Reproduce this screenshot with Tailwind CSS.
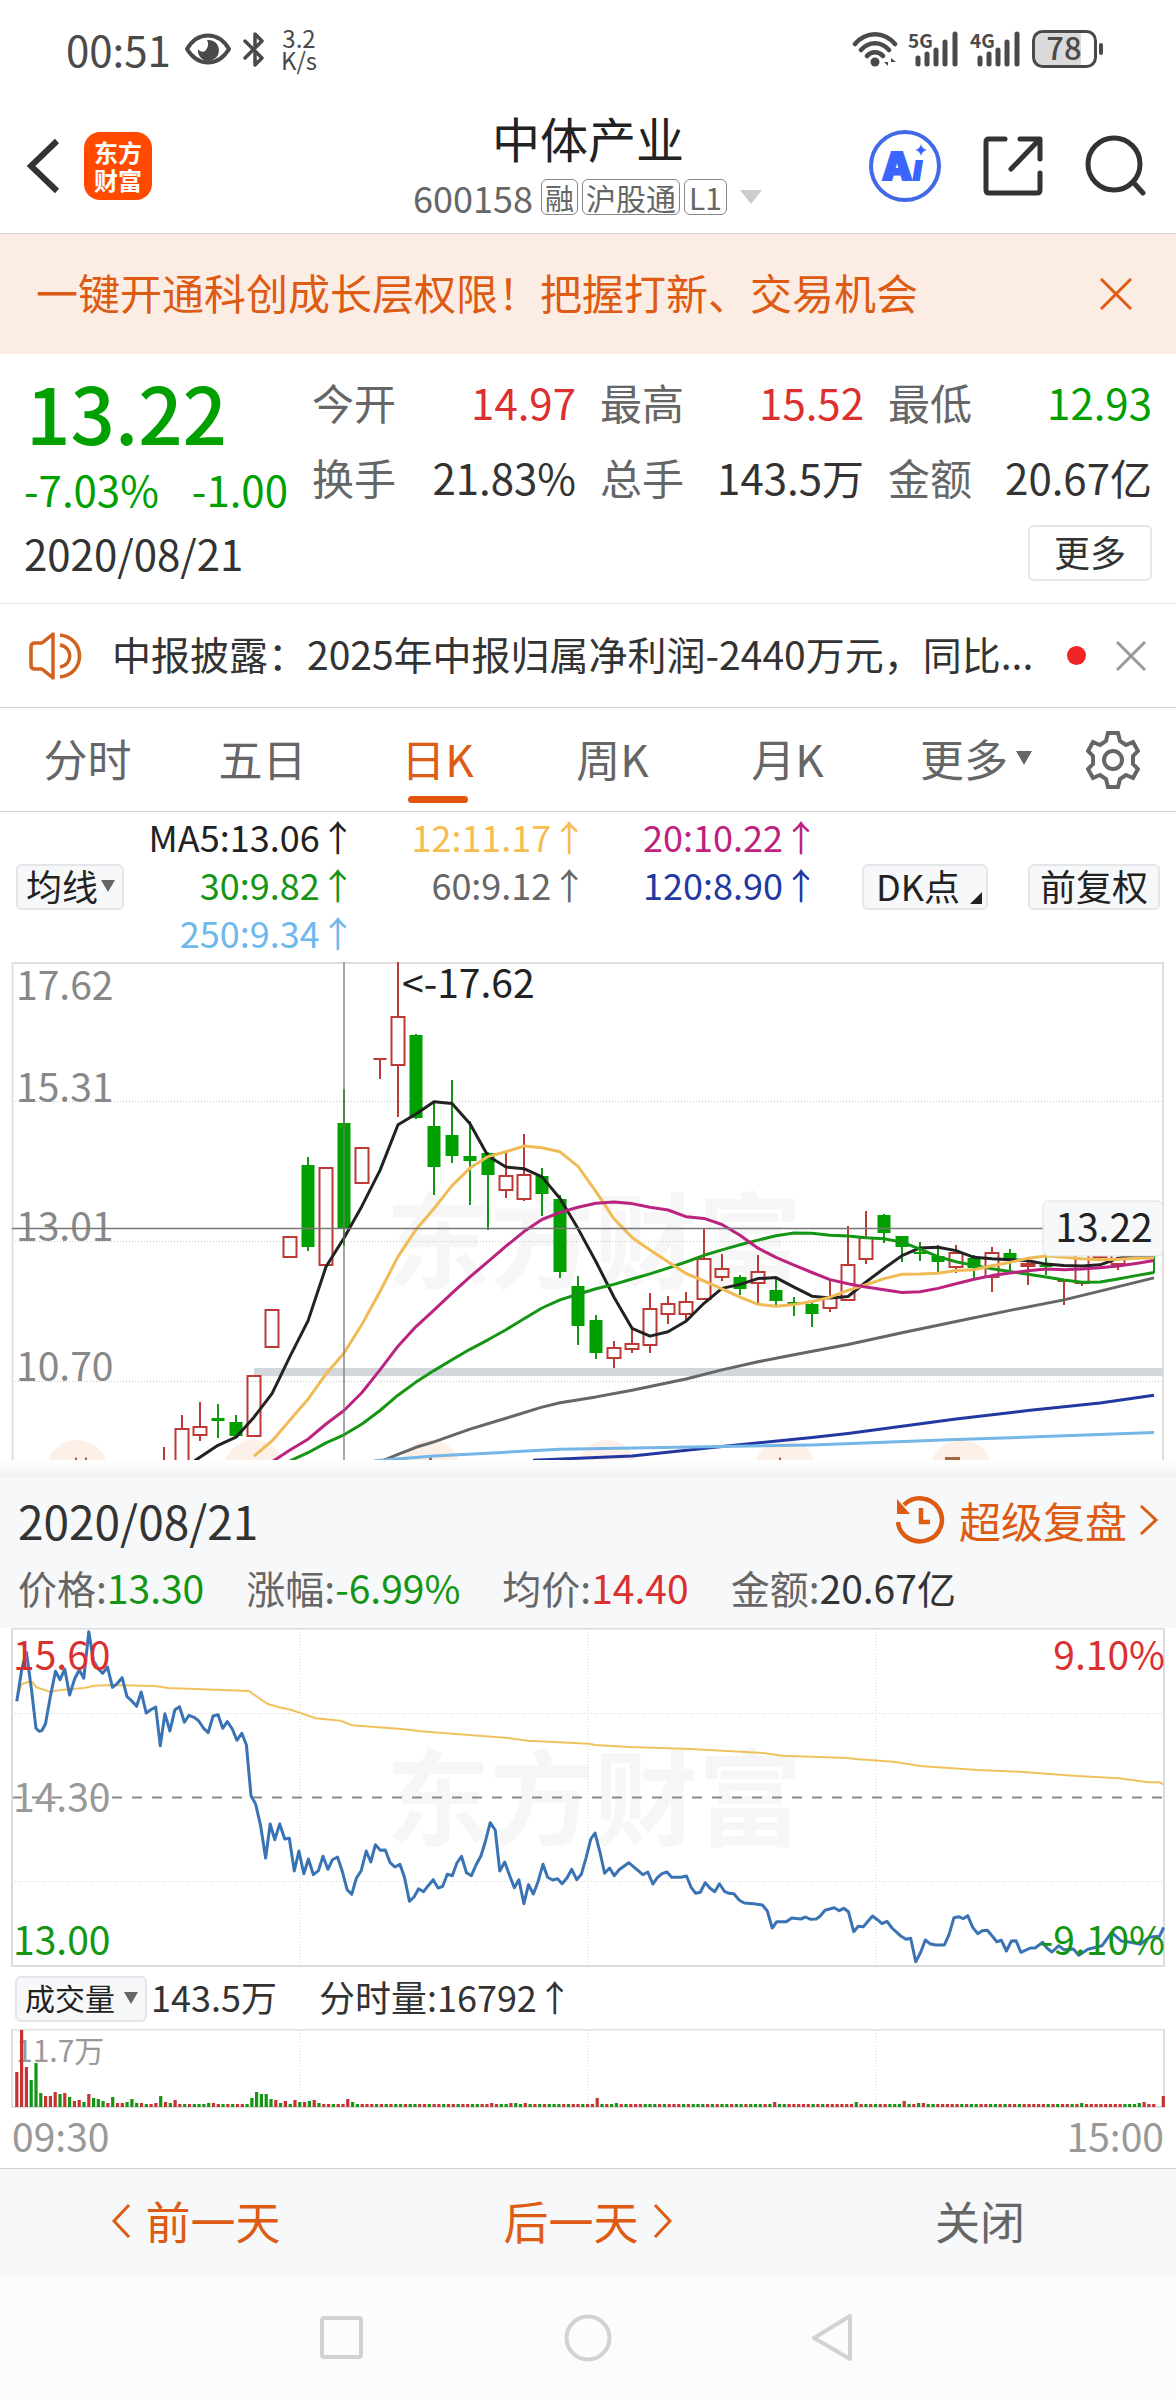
<!DOCTYPE html>
<html lang="zh-CN">
<head>
<meta charset="utf-8">
<meta name="viewport" content="width=device-width, initial-scale=1">
<title>中体产业 600158</title>
<script src="https://cdn.jsdelivr.net/npm/@tailwindcss/browser@4"></script>
</head>
<body class="bg-white font-['Noto_Sans_CJK_SC',sans-serif] text-[#333]">

<!-- System status bar -->
<div class="flex h-[98px] items-center justify-between pl-[66px] pr-[72px] text-[#4a4a4a]">
  <div class="flex items-center">
    <span class="text-[42px] leading-[64px]">00:51</span>
    <svg class="ml-3.5 h-8 w-[46px]" viewBox="0 0 46 32" fill="none"><path d="M2 16C8 6 15 2.500 23 2.500S38 6 44 16C38 26 31 29.500 23 29.500S8 26 2 16Z" stroke="currentColor" stroke-width="4"/><path d="M22 7a10.500 10.500 0 1 1-9 9c2 3 6 4 8 1s3-6 1-10Z" fill="currentColor"/></svg>
    <svg class="ml-3 h-9 w-[22px]" viewBox="0 0 22 36" fill="none" stroke="currentColor" stroke-width="3.500" stroke-linecap="round" stroke-linejoin="round"><path d="M2 10 19 27l-7 7V20M2 27 19 10l-7-7v12"/></svg>
    <span class="ml-4 text-center text-[24px] leading-[22px]">3.2<br>K/s</span>
  </div>
  <div class="flex items-center">
    <svg class="h-9 w-[46px]" viewBox="0 0 46 36" fill="none" stroke="currentColor" stroke-width="4.500" stroke-linecap="round"><path d="M3 13C14 0 32 0 43 13M9 19c8-9 20-9 28 0M15 25c4-5 12-5 16 0"/><circle cx="23" cy="31" r="4.500" fill="currentColor" stroke="none"/><path d="M36 27v8l-4-4h4M39 35v-8l5 4h-5" fill="currentColor" stroke="none"/></svg>
    <svg class="ml-2.5 h-9 w-[52px] overflow-visible" viewBox="0 0 52 36"><text x="0" y="17" font-size="19" font-weight="700" fill="currentColor">5G</text><path d="M10 27v6M19 23v10M28 19v14M37 11v22M47 3v30" stroke="currentColor" stroke-width="5" stroke-linecap="round"/></svg>
    <svg class="ml-2.5 h-9 w-[52px] overflow-visible" viewBox="0 0 52 36"><text x="0" y="17" font-size="19" font-weight="700" fill="currentColor">4G</text><path d="M10 27v6M19 23v10M28 19v14M37 11v22M47 3v30" stroke="currentColor" stroke-width="5" stroke-linecap="round"/></svg>
    <svg class="ml-2.5 h-[38px] w-[72px] overflow-visible" viewBox="0 0 72 38"><rect x="1.500" y="1.500" width="62" height="35" rx="9" fill="#fff"/><path d="M10 2h39v34H10a8 8 0 0 1-8-8V10a8 8 0 0 1 8-8Z" fill="#dadada"/><rect x="1.500" y="1.500" width="62" height="35" rx="9" fill="none" stroke="currentColor" stroke-width="3"/><rect x="67" y="13" width="4" height="12" rx="2" fill="currentColor"/><text x="32" y="30" text-anchor="middle" font-size="31" font-weight="500" fill="currentColor">78</text></svg>
  </div>
</div>

<!-- App header -->
<header class="grid h-[136px] grid-cols-[1fr_auto_1fr] items-center border-b border-[#d4d4d4] px-6">
  <div class="flex items-center gap-6">
    <button aria-label="返回"><svg class="h-14 w-9" viewBox="0 0 36 56" fill="none" stroke="#333" stroke-width="6"><path d="M33 3 7 28l26 25"/></svg></button>
    <a href="#" class="grid size-[68px] place-content-center rounded-2xl bg-[#ff4a00] text-center text-[24px] font-bold leading-7 text-white">东方<br>财富</a>
  </div>
  <div class="flex flex-col items-center pb-0.5">
    <h1 class="text-[48px] leading-[56px] text-[#222]">中体产业</h1>
    <div class="mt-2 flex items-center gap-1 text-[#666]">
      <span class="text-[36px] leading-[48px]">600158</span>
      <span class="ml-1 grid h-9 place-content-center rounded-md border border-[#888] px-[3px] text-[29px] leading-[34px]">融</span>
      <span class="grid h-9 place-content-center rounded-md border border-[#888] px-[3px] text-[30px] leading-[34px]">沪股通</span>
      <span class="grid h-9 place-content-center rounded-md border border-[#888] px-1 text-[30px] leading-[34px]">L1</span>
      <svg class="ml-2 h-4 w-6" viewBox="0 0 24 16"><path d="M1 1h22L12 15Z" fill="#ccc"/></svg>
    </div>
  </div>
  <div class="flex items-center justify-end gap-10 pr-1.5">
    <button aria-label="Ai"><svg class="size-[74px]" viewBox="0 0 74 74"><circle cx="37" cy="37" r="34" fill="#fff" stroke="#4169e8" stroke-width="4"/><text x="14" y="51" font-family="Inter, sans-serif" font-size="38" font-weight="900" fill="#3a66ff" stroke="#3a66ff" stroke-width="2">A</text><text x="44" y="52" font-family="Inter, sans-serif" font-size="38" font-weight="900" font-style="italic" fill="#3a66ff">ı</text><path d="M53 15q1 5 6 6-5 1-6 6-1-5-6-6 5-1 6-6Z" fill="#3a66ff"/></svg></button>
    <button aria-label="分享"><svg class="size-[62px]" viewBox="0 0 62 62" fill="none" stroke="#333" stroke-width="5" stroke-linecap="round" stroke-linejoin="round"><path d="M23 4H7q-3 0-3 3v48q0 3 3 3h48q3 0 3-3V38M38 4h20v20M56 6 29 34"/></svg></button>
    <button aria-label="搜索"><svg class="size-[62px]" viewBox="0 0 62 62" fill="none" stroke="#333" stroke-width="5" stroke-linecap="round"><circle cx="30" cy="29" r="26"/><path d="m49 47 10 11"/></svg></button>
  </div>
</header>

<!-- Promotion banner -->
<div class="flex h-[120px] items-center justify-between bg-[#fcede4] pl-9 pr-11 text-[#dd5b13]">
  <a href="#" class="pb-1 text-[42px] leading-[60px]">一键开通科创成长层权限！把握打新、交易机会</a>
  <button aria-label="关闭提示"><svg class="size-8" viewBox="0 0 32 32" fill="none" stroke="currentColor" stroke-width="3"><path d="m1 1 30 30M31 1 1 31"/></svg></button>
</div>

<!-- Quote summary -->
<section class="border-b border-[#ebebeb] px-6 pt-1 pb-[22px]">
  <div class="grid grid-cols-4 gap-x-6 text-[42px]">
    <div class="text-[#00a000]">
      <div class="h-[104px] pl-0.5 text-[78px] font-medium leading-[106px]">13.22</div>
      <div class="flex h-[52px] justify-between gap-6 whitespace-nowrap leading-[54px]"><span>-7.03%</span><span>-1.00</span></div>
    </div>
    <dl class="flex flex-col whitespace-nowrap pt-1.5 leading-[75px]">
      <div class="flex justify-between"><dt class="text-[#666]">今开</dt><dd class="text-[#dc2f2f]">14.97</dd></div>
      <div class="flex justify-between"><dt class="text-[#666]">换手</dt><dd>21.83%</dd></div>
    </dl>
    <dl class="flex flex-col whitespace-nowrap pt-1.5 leading-[75px]">
      <div class="flex justify-between"><dt class="text-[#666]">最高</dt><dd class="text-[#dc2f2f]">15.52</dd></div>
      <div class="flex justify-between"><dt class="text-[#666]">总手</dt><dd>143.5万</dd></div>
    </dl>
    <dl class="flex flex-col whitespace-nowrap pt-1.5 leading-[75px]">
      <div class="flex justify-between"><dt class="text-[#666]">最低</dt><dd class="text-[#00a000]">12.93</dd></div>
      <div class="flex justify-between"><dt class="text-[#666]">金额</dt><dd>20.67亿</dd></div>
    </dl>
  </div>
  <div class="mt-[11px] flex h-14 items-center justify-between">
    <time class="text-[42px] leading-[56px]">2020/08/21</time>
    <button class="h-14 rounded-md border-2 border-[#e6e6e6] px-6 pb-1 text-[36px] leading-[44px]">更多</button>
  </div>
</section>

<!-- News ticker -->
<section class="flex h-[104px] items-center border-b border-[#d4d4d4] pl-7 pr-[30px]">
  <svg class="h-12 w-[54px] shrink-0" viewBox="0 0 54 48" fill="none" stroke="#d2601f" stroke-width="3.500" stroke-linejoin="round"><path d="M25 2 14 11H7q-4 0-4 4v18q0 4 4 4h7l11 9Z"/><path d="M32 3c26 3 26 39 0 42M32 13c13 2 13 20 0 22"/></svg>
  <a href="#" class="ml-[30px] min-w-0 flex-1 overflow-hidden whitespace-nowrap pb-1.5 text-[39px] leading-[56px]">中报披露：2025年中报归属净利润-2440万元，同比...</a>
  <span class="size-[19px] shrink-0 rounded-full bg-[#f02424]"></span>
  <button class="ml-[30px]" aria-label="关闭公告"><svg class="size-[30px]" viewBox="0 0 30 30" fill="none" stroke="#999" stroke-width="3"><path d="m1 1 28 28M29 1 1 29"/></svg></button>
</section>

<!-- Period tabs -->
<nav class="grid h-[104px] grid-cols-[repeat(6,25fr)_18fr] border-b border-[#d4d4d4] text-[44px] text-[#666]">
  <button class="pb-1">分时</button>
  <button class="pb-1">五日</button>
  <button class="relative pb-1 text-[#dd5b13]">日K<span class="absolute bottom-2 left-1/2 h-[7px] w-[60px] -translate-x-1/2 rounded-full bg-[#e0560c]"></span></button>
  <button class="pb-1">周K</button>
  <button class="pb-1">月K</button>
  <button class="flex items-center justify-end gap-2 whitespace-nowrap pb-1 pr-[18px]">更多<svg class="h-3.5 w-4" viewBox="0 0 16 14"><path d="M0 0h16L8 14Z" fill="currentColor"/></svg></button>
  <button class="grid place-content-center" aria-label="设置"><svg class="h-[60px] w-[54px]" viewBox="0 0 54 60" fill="none" stroke="currentColor" stroke-width="4"><path d="M22 3h10l2 8 6 4 7-3 5 9-5 5v8l5 5-5 9-7-3-6 4-2 8H22l-2-8-6-4-7 3-5-9 5-5v-8l-5-5 5-9 7 3 6-4Z"/><circle cx="27" cy="30" r="9"/></svg></button>
</nav>

<!-- Moving average legend -->
<section class="flex h-[150px] items-center px-4 text-[36px] text-[#222]">
  <label class="relative shrink-0">
    <select class="block h-[46px] w-[108px] appearance-none rounded-md border-2 border-[#e4e6ea] bg-[#f6f8fa] pb-1 pl-2 text-[36px] leading-[38px]" aria-label="指标"><option>均线</option></select>
    <svg class="pointer-events-none absolute right-2 top-4 h-3 w-4" viewBox="0 0 16 12"><path d="M1 0h14L8 12Z" fill="#666"/></svg>
  </label>
  <div class="grid flex-[695] grid-cols-3 whitespace-nowrap pb-1.5 text-right leading-[48px]">
    <span>MA5:13.06↑</span><span class="text-[#f5bd4f]">12:11.17↑</span><span class="text-[#c0207e]">20:10.22↑</span>
    <span class="text-[#149614]">30:9.82↑</span><span class="text-[#666]">60:9.12↑</span><span class="text-[#2238a0]">120:8.90↑</span>
    <span class="text-[#6fb8ec]">250:9.34↑</span>
  </div>
  <div class="flex flex-[341] justify-end gap-10">
    <button class="relative h-[46px] w-[126px] rounded-md border-2 border-[#e4e6ea] bg-[#f6f8fa] pb-1 pl-3 text-left leading-[38px]">DK点<svg class="absolute bottom-1 right-1 size-3" viewBox="0 0 12 12"><path d="M12 0v12H0Z" fill="#222"/></svg></button>
    <button class="h-[46px] w-[132px] whitespace-nowrap rounded-md border-2 border-[#e4e6ea] bg-[#f6f8fa] pb-1 leading-[38px]">前复权</button>
  </div>
</section>

<!-- Daily candlestick chart -->
<svg class="block h-auto w-full" viewBox="0 0 1176 498" role="img" aria-label="日K线图">
  <text x="386" y="319" font-size="104" font-weight="700" fill="#f6f6f6">东方财富</text>
  <g fill="#fdf0e8"><circle cx="77" cy="509" r="31"/><circle cx="254" cy="509" r="31"/><circle cx="430" cy="509" r="31"/><circle cx="607" cy="509" r="31"/><circle cx="785" cy="509" r="31"/><circle cx="961" cy="509" r="31"/></g>
  <path d="M945 496.500h15M75 497h2M85 497h2M429 497h3M779 497h2" stroke="#a5673f" stroke-width="3"/>
  <g stroke="#c9c9c9" stroke-dasharray="1 2"><path d="M12 139.500h1151M12 279.500h1151M12 419.500h1151"/></g>
  <path d="M12.500 498V1M1163 498V1M12 1h1152" stroke="#dfdfdf" stroke-width="2" fill="none"/>
  <rect x="254" y="406" width="909" height="8" fill="#d3d6da"/>
  <g font-size="39" fill="#888"><text x="16" y="38">17.62</text><text x="16" y="140">15.31</text><text x="16" y="279">13.01</text><text x="16" y="419">10.70</text></g>
  <g id="candles"></g>
  <g id="averages" fill="none" stroke-width="3" stroke-linejoin="round"></g>
  <path d="M344 0v498" stroke="#777" stroke-opacity=".65" stroke-width="2"/>
  <path d="M12 266.500h1151" stroke="#777" stroke-width="1.500"/>
  <text x="402" y="36" font-size="39" fill="#222">&lt;-17.62</text>
  <rect x="1043" y="239" width="120" height="55" rx="6" fill="#f6f8fa" stroke="#dcdfe3"/>
  <text x="1104" y="280" font-size="39" fill="#222" text-anchor="middle">13.22</text>
</svg>
<div class="h-[18px] bg-linear-to-b from-white to-[#f0f0f0]"></div>

<!-- Intraday replay panel -->
<section>
  <div class="bg-[#f6f8fa] pl-[18px] pr-[15px] pt-2.5">
    <div class="flex h-16 items-center justify-between">
      <time class="text-[46px] leading-[64px]">2020/08/21</time>
      <a href="#" class="flex items-center text-[42px] leading-[64px] text-[#dd5b13]">
        <svg class="mr-3.5 size-[50px]" viewBox="0 0 50 50" fill="none" stroke="currentColor" stroke-width="4.500"><path d="M3 27a22 21.500 0 1 0 6-17"/><path d="M2 4v15h13Z" fill="currentColor" stroke="none"/><path d="M26 13v14h9"/></svg>超级复盘<svg class="ml-3 mr-0.5 h-8 w-5" viewBox="0 0 20 32" fill="none" stroke="currentColor" stroke-width="3"><path d="m2 2 15 14L2 30"/></svg>
      </a>
    </div>
    <div class="flex h-[76px] gap-[42px] whitespace-nowrap text-[39px] leading-[70px] text-[#666]">
      <span>价格:<b class="font-normal text-[#149614]">13.30</b></span>
      <span>涨幅:<b class="font-normal text-[#149614]">-6.99%</b></span>
      <span>均价:<b class="font-normal text-[#dc2f2f]">14.40</b></span>
      <span>金额:<b class="font-normal text-[#333]">20.67亿</b></span>
    </div>
  </div>

  <svg class="block h-auto w-full" viewBox="0 0 1176 340" role="img" aria-label="分时走势图">
    <text x="386" y="210" font-size="104" font-weight="700" fill="#f6f6f6">东方财富</text>
    <path d="M12 85.500h1152M12 253.500h1152M300 1v336M588 1v336M876 1v336" stroke="#d2d2d2" stroke-dasharray="1 2"/>
    <path d="M12 169.500h1152" stroke="#8a8a8a" stroke-width="2" stroke-dasharray="10 10"/>
    <path d="M12 .500h1152V338H12Z" stroke="#dcdcdc" stroke-width="2" fill="none"/>
    <polyline id="avgLine" fill="none" stroke="#f0c25e" stroke-width="2"/>
    <polyline id="priceLine" fill="none" stroke="#3a73b3" stroke-width="3" stroke-linejoin="round"/>
    <g font-size="39"><text x="13" y="42" fill="#d93030">15.60</text><text x="13" y="184" fill="#999">14.30</text><text x="13" y="327" fill="#149614">13.00</text>
    <g text-anchor="end"><text x="1165" y="42" fill="#d93030">9.10%</text><text x="1165" y="327" fill="#149614">-9.10%</text></g></g>
  </svg>

  <div class="flex h-[61px] items-center pl-[15px] text-[36px]">
    <label class="relative shrink-0">
      <select class="block h-[46px] w-[132px] appearance-none rounded-md border-2 border-[#e4e6ea] bg-[#f6f8fa] pb-1 pl-2 text-[30px] leading-[38px] text-[#222]" aria-label="副图指标"><option>成交量</option></select>
      <svg class="pointer-events-none absolute right-2 top-4 h-3 w-4" viewBox="0 0 16 12"><path d="M1 0h14L8 12Z" fill="#666"/></svg>
    </label>
    <span class="ml-1 pb-1.5">143.5万</span><span class="ml-[42px] pb-1.5">分时量:16792↑</span>
  </div>

  <svg class="block h-auto w-full" viewBox="0 0 1176 79" role="img" aria-label="分时成交量">
    <path d="M300 1v77M588 1v77M876 1v77" stroke="#d2d2d2" stroke-dasharray="1 2"/>
    <path d="M12 .500h1152V78H12Z" stroke="#dfdfdf" stroke-width="2" fill="none"/>
    <text x="16" y="33" font-size="30" fill="#999">11.7万</text>
    <g id="volume"></g>
  </svg>
  <div class="flex h-[60px] justify-between px-3 text-[39px] leading-[54px] text-[#999]"><span>09:30</span><span>15:00</span></div>

  <div class="grid h-[109px] grid-cols-3 border-t border-[#d4d4d4] bg-[#f6f8fa] text-[45px] text-[#dd5b13]">
    <button class="flex items-center justify-center gap-3.5 pb-1"><svg class="h-9 w-5" viewBox="0 0 20 36" fill="none" stroke="currentColor" stroke-width="3"><path d="M18 2 3 18l15 16"/></svg>前一天</button>
    <button class="flex items-center justify-center gap-3.5 pb-1">后一天<svg class="h-9 w-5" viewBox="0 0 20 36" fill="none" stroke="currentColor" stroke-width="3"><path d="m2 2 15 16L2 34"/></svg></button>
    <button class="pb-1 text-[#666]">关闭</button>
  </div>
</section>

<!-- System navigation -->
<div class="flex h-[122px] items-center justify-center gap-[198px] bg-[#fcfcfc]">
  <button aria-label="最近任务"><svg class="size-12" viewBox="0 0 48 48" fill="none" stroke="#d2d2d2" stroke-width="4"><rect x="4" y="4" width="39" height="39" rx="2"/></svg></button>
  <button aria-label="主页"><svg class="size-12" viewBox="0 0 48 48" fill="none" stroke="#d2d2d2" stroke-width="4"><circle cx="24" cy="24" r="21.500"/></svg></button>
  <button aria-label="返回上级"><svg class="size-12" viewBox="0 0 48 48" fill="none" stroke="#d2d2d2" stroke-width="4" stroke-linejoin="round"><path d="M40 2v43L4 24Z"/></svg></button>
</div>

<script>
// Candles: [kind, high, bodyTop, bodyBottom, low], one per trading day
const candles = [
['r',485,520,530,530],['r',453,467,520,520],['r',440,465,473,479],['g',442,456,459,476],['g',453,460,474,474],['r',414,414,474,474],
['r',348,348,385,385],['r',275,275,295,295],['g',195,203,285,289],['r',206,206,303,303],['g',127,161,266,284],['r',186,186,221,221],
['t',97,97,97,117],['r',0,55,103,155],['g',72,73,156,157],['g',141,164,205,233],['g',118,173,194,201],['g',159,194,199,243],
['g',190,191,213,268],['r',190,214,228,236],['r',172,213,237,239],['g',206,214,232,254],['g',233,237,310,316],['g',314,324,364,383],
['g',353,358,391,397],['r',379,386,396,406],['r',367,382,387,391],['r',331,347,383,391],['r',334,342,352,362],['r',330,340,352,358],
['r',267,297,337,337],['r',292,307,315,319],['g',313,315,327,333],['r',293,310,321,341],['g',316,328,339,343],['g',335,340,342,354],
['g',341,342,352,365],['r',318,335,346,350],['r',264,303,338,338],['r',249,276,297,302],['g',252,253,271,281],['g',274,274,285,300],
['g',280,290,292,299],['g',283,294,300,310],['r',283,291,305,311],['g',293,296,306,316],['r',285,291,315,330],['g',287,291,298,308],
['r',300,302,304,323],['g',294,303,305,313],['t',319,319,319,343],['r',288,293,321,324],['r',285,285,295,297],['r',285,285,302,308],
['r',285,285,295,297]];
const xAt = i => 164 + 18 * i;
let wickR = '', boxR = '', wickG = '', boxG = '';
candles.forEach(([k, h, t, b, l], i) => {
  const x = xAt(i);
  if (k === 'g') { wickG += `M${x} ${h}V${l}`; boxG += `M${x - 6.5} ${t}h13V${b}h-13Z`; }
  else if (k === 't') { wickR += `M${x - 6.5} ${t}h13M${x} ${t}V${l}`; }
  else { wickR += `M${x} ${h}V${t}M${x} ${b}V${l}`; boxR += `M${x - 6.5} ${t}h13V${b}h-13Z`; }
});
document.getElementById('candles').innerHTML =
  `<path d="${wickR}${boxR}" fill="none" stroke="#bb3a36" stroke-width="2"/>` +
  `<path d="${wickG}M1154 293V311" stroke="#149614" stroke-width="2"/><path d="${boxG}" fill="#00a000"/>`;

// Moving averages: colour, first day, then one level per day; or [day, level] pairs
const series = [
['#666',[[12,1517],[13,1495],[14,1474],[15,1458],[17,1420],[19,1388],[21,1355],[22,1342],[24,1325],[26,1305],[29,1272],[31,1245],[33,1221],[35,1200],[38,1170],[41,1135],[44,1102],[47,1069],[50,1038],[52,1012],[55,973]]],
['#2238a0',[[20.5,1512],[24,1504],[26,1500],[31,1472],[36,1445],[38,1433],[44,1390],[48,1365],[52,1343],[55,1320]]],
['#74b6e6',[[11.7,1514],[15,1500],[18.5,1490],[22,1480],[31,1472],[36,1467],[40,1459],[44,1451],[48.5,1443],[55,1430]]],
['#222',1.7,[1514,1468,1444,1385,1315,1205,1100,940,855,760,655,520,488,452,457,517,612,645,650,674,738,827,925,1030,1122,1145,1132,1101,1048,1004,992,975,972,1000,1027,1032,1028,985,945,907,884,882,892,912,916,919,922,932,936,938,934,915,905,912],3],
['#149614',7,[1514,1490,1461,1437,1405,1365,1320,1281,1247,1215,1184,1156,1126,1094,1062,1038,1021,1005,992,976,961,944,926,906,890,875,861,848,840,841,847,849,854,857,867,888,910,925,936,946,954,962,970,979,986,985,976,966,957]],
['#f0bb55',5,[1500,1455,1393,1332,1257,1195,1110,1013,910,830,768,700,648,614,600,583,588,600,643,718,798,853,890,925,960,982,1005,1030,1051,1057,1052,1043,1030,1010,993,975,962,961,959,951,949,937,927,915,908,912,916,919,918,915,914]],
['#bb2380',6,[1517,1482,1450,1405,1365,1312,1245,1175,1117,1068,1018,970,925,879,836,800,779,764,752,748,753,764,772,792,797,815,847,885,912,935,957,978,990,1000,1008,1016,1014,1004,990,977,966,958,952,947,949,947,943,938,930,921]]];
document.getElementById('averages').innerHTML = series.map(([c, a, v, next]) => {
  const pts = v ? v.map((y, n) => [n ? (next || Math.round(a) + 1) + n - 1 : a, y]) : a;
  return `<polyline stroke="${c}" points="${pts.map(([i, y]) => xAt(i).toFixed(1) + ',' + (y / 2.958 - 13).toFixed(1)).join(' ')}"/>`;
}).join('');

// Intraday price and average price, as time/level pairs
const px = s => { const n = s.trim().split(/[\s,]+/).map(Number); let o = ''; for (let i = 0; i < n.length; i += 2) o += (n[i] / 2.6133).toFixed(1) + ',' + (n[i + 1] / 3 - 159).toFixed(1) + ' '; return o; };
const later = s => s.trim().split(/\s+/).map(p => { const [x, y] = p.split(','); return (+x + 1505) + ',' + y; }).join(' ');
document.getElementById('priceLine').setAttribute('points', px(`44,697 57,600 69,550 82,660 94,778 103,787 110,784 119,764 132,680 145,607 157,632 169,600 182,678 195,630 207,603 219,628 232,488 244,575 257,600 268,613 281,594 294,655 307,643 319,626 332,683 344,695 357,712 369,669 382,732 394,722 407,714 419,830 431,734 444,786 457,722 469,713 482,760 494,739 507,745 519,755 532,778 544,791 557,741 570,737 582,778 594,758 607,780 619,814 632,793 644,828 656,980 668,1005 681,1070 694,1167 706,1065 718,1112 731,1065 744,1110 756,1108 769,1206 781,1146 794,1214 806,1170 819,1217 832,1205 844,1162 857,1201 869,1172 882,1164 894,1205 907,1262 919,1276 931,1228 944,1205 957,1146 969,1179 981,1127 994,1144 1007,1143 1019,1180 1032,1194 1045,1186 1057,1225 1070,1297 1082,1284 1094,1259 1107,1268 1119,1250 1132,1232 1145,1257 1157,1252 1169,1216 1182,1220 1194,1182 1206,1162 1219,1211 1232,1220 1244,1188 1257,1160 1269,1115 1281,1061 1294,1083 1306,1206 1319,1179 1332,1220 1344,1256 1356,1232 1369,1304 1381,1247 1394,1275 1406,1238 1419,1186 1431,1225 1444,1233 1457,1229 1469,1244 1482,1226 1494,1201 1507,1232 1519,1216 1532,1165 1544,1110 `) + px(later(`50,1092 63,1150 75,1213 88,1197 100,1220 113,1202 138,1181 175,1217 188,1209 201,1245 213,1226 225,1214 238,1209 250,1225 275,1225 289,1221 301,1255 313,1273 325,1270 338,1241 350,1257 363,1268 375,1244 388,1267 400,1273 413,1274 427,1294 440,1302 465,1304 487,1308 500,1325 513,1377 525,1358 550,1358 564,1347 588,1350 600,1344 613,1351 628,1350 638,1342 651,1324 675,1316 688,1325 700,1318 712,1328 726,1388 738,1372 751,1373 775,1341 788,1352 800,1364 813,1357 826,1377 850,1402 863,1411 875,1408 888,1478 901,1450 913,1413 925,1424 940,1428 963,1428 975,1397 988,1346 1000,1343 1012,1349 1024,1340 1037,1375 1050,1394 1062,1385 1075,1384 1088,1401 1100,1418 1112,1414 1125,1446 1138,1416 1150,1415 1163,1450 1188,1437 1200,1437 1220,1420 1232,1438 1244,1449 1262,1430 1275,1442 1300,1440 1314,1459 1338,1441 1375,1430 1400,1390 1425,1416 1450,1420 1475,1426 1500,1404 1525,1402 1536,1375`)));
document.getElementById('avgLine').setAttribute('points', px(`44,690 57,645 75,638 85,640 95,655 130,668 160,663 220,657 245,650 290,648 405,651 440,657 650,666 700,705 730,715 760,722 825,748 890,755 920,769 1050,780 1100,787 1200,796 1320,806 1380,815 1540,824 `) + px(later(`50,828 140,834 300,840 490,852 540,860 710,867 730,870 830,878 900,891 1050,903 1160,908 1310,921 1420,928 1495,940 1525,940 1536,946`)));

// Volume per minute; minutes without an entry traded the minimum height
const tall = {0:35,1:77,2:40,3:27,4:44,5:14,6:11,7:11,8:15,9:13,10:14,11:10,12:6,13:7,14:5,15:13,16:9,17:8,18:6,19:4,20:10,21:4,22:4,23:5,24:8,25:4,26:4,29:4,30:11,31:5,32:4,33:7,40:4,41:4,49:9,50:15,51:13,52:13,53:8,54:7,55:4,56:6,58:7,59:5,60:5,61:6,62:7,63:4,69:8,70:5,99:4,103:4,104:4,106:4,121:9,125:4,158:5,175:5,185:6,188:4,189:4,222:4,234:4,235:5,239:11};
const tint = 'rrrgggrrrgrgrrgrgggrgrrgggrgrrgrgrrgrggggrrgrgrrggggggrgrgrgrgrgrrgrrrggrrrgrgrggrggrrgrrgrrgrrggrrrrggrggrgrgrgggrgrrgrrrgrggrgrrrgggrgrrrgrgggrgrggrggrgggrgrggrrrrrgrgrrrrrrgrgrgrrgggrgrgrggrrrrrgrggrrggrgrrgrrrrrgrgrrgrgrrrrrrrrggggrrrrgrr';
let bars = '';
for (let m = 0; m < 240; m++) {
  if (m === 238) continue;
  const h = tall[m] || 3, green = tint[m] === 'g' && m !== 239;
  bars += `<rect x="${(15.2 + 4.797 * m).toFixed(1)}" y="${78 - h}" width="3.200" height="${h}" fill="${green ? '#149614' : '#c83232'}"/>`;
}
document.getElementById('volume').innerHTML = bars;
</script>
</body>
</html>
